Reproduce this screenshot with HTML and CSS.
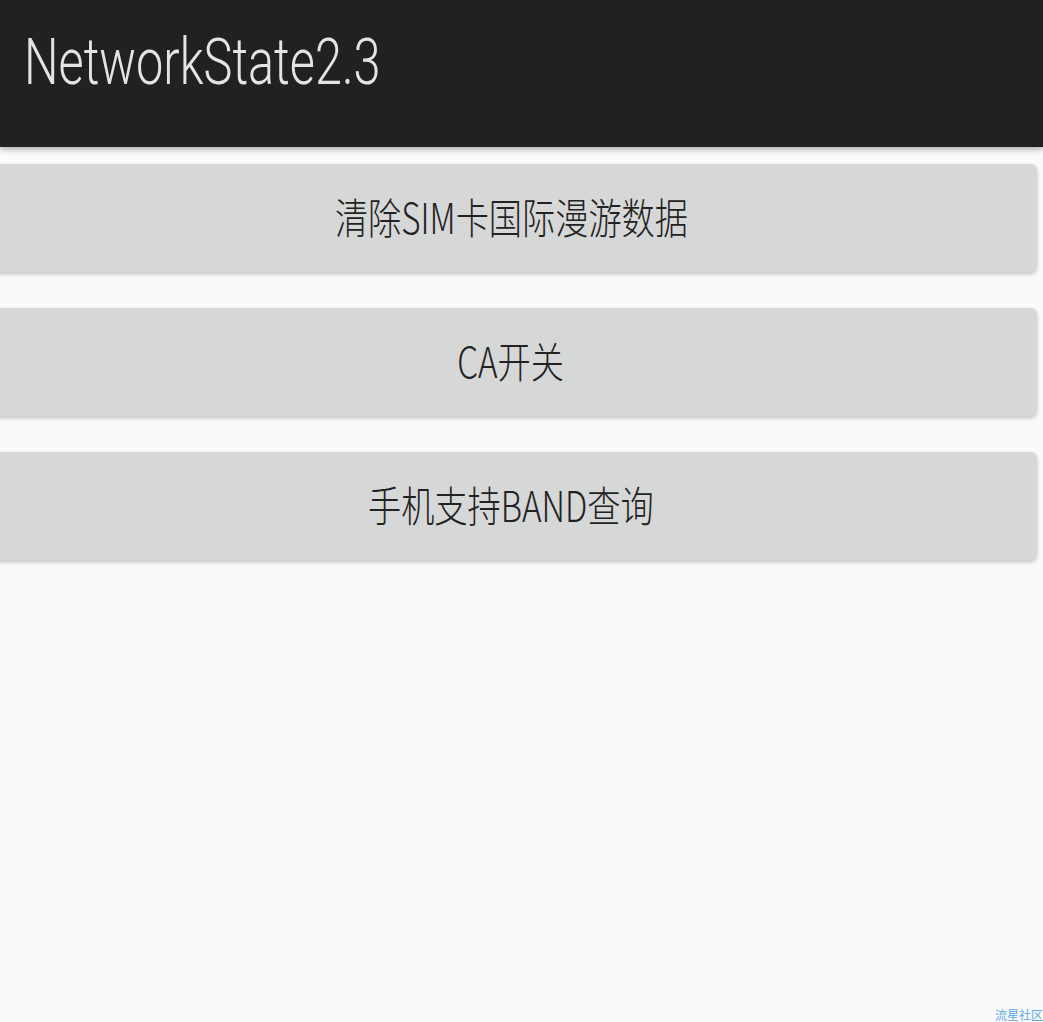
FILE: index.html
```html
<!DOCTYPE html>
<html lang="zh-CN">
<head>
    <meta charset="UTF-8">
    <meta name="viewport" content="width=device-width, initial-scale=1.0">
    <title>NetworkState2.3</title>
    <link rel="stylesheet" href="styles.css">
</head>
<body>
    <!-- 标题栏 -->
    <header class="toolbar">
        <h1 class="title"><span class="narrow">NetworkState2.3</span></h1>
    </header>

    <!-- 功能按钮 -->
    <main class="actions">
        <button class="action-btn"><span class="narrow">清除SIM卡国际漫游数据</span></button>
        <button class="action-btn"><span class="narrow">CA开关</span></button>
        <button class="action-btn"><span class="narrow">手机支持BAND查询</span></button>
    </main>

    <div class="watermark">流星社区</div>
</body>
</html>
```

FILE: styles.css
```css
* { margin: 0; padding: 0; box-sizing: border-box; }
html, body { height: 100%; }
body { background: #fafafa; font-family: "Noto Sans CJK SC", "Noto Sans", sans-serif; overflow: hidden; position: relative; }

.toolbar { height: 147px; background: #212121; display: flex; align-items: center; padding-left: 24px; box-shadow: 0 2px 6px rgba(0,0,0,0.35); position: relative; z-index: 1; }
.title { font-family: Roboto, "Noto Sans", sans-serif; font-weight: 300; font-size: 64px; color: #e4e4e4; line-height: 1; margin-top: -22px; }
.title .narrow { display: inline-block; transform: scaleX(0.76); transform-origin: left center; }

.actions { display: flex; flex-direction: column; gap: 36px; padding-top: 17px; }
.action-btn { height: 108px; margin-left: -15px; margin-right: 6px; border: none; border-radius: 6px; background: #d6d7d7; box-shadow: 0 2px 4px rgba(0,0,0,0.22); font-family: "Noto Sans CJK SC", sans-serif; font-size: 42px; font-weight: 300; color: #222; display: flex; align-items: center; justify-content: center; padding-bottom: 6px; }
.action-btn .narrow { display: inline-block; transform: scaleX(0.79); }

.watermark { position: absolute; right: 0; bottom: 1px; font-size: 12px; color: #5aa9e6; line-height: 1; }
```
